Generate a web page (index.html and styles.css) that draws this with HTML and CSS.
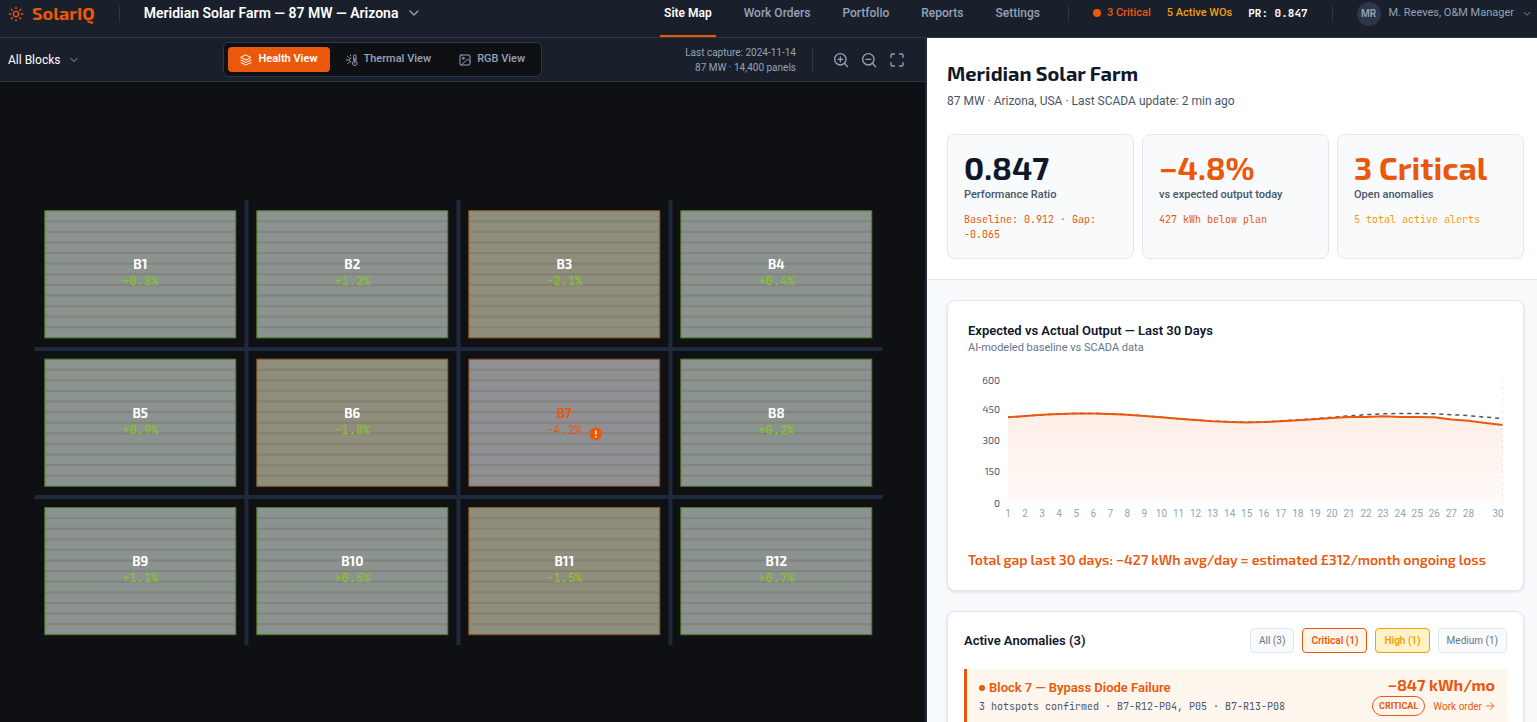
FILE: index.html
```
<!DOCTYPE html>
<html lang="en">
<head>
<meta charset="utf-8">
<title>SolarIQ — Site Map</title>
<link rel="stylesheet" href="styles.css">
</head>
<body>
<header class="topbar">
  <a class="brand" href="#">
    <svg class="icon" width="16" height="16" viewBox="0 0 24 24"><circle cx="12" cy="12" r="4"/><path d="M12 2v2M12 20v2M4.9 4.9l1.4 1.4M17.7 17.7l1.4 1.4M2 12h2M20 12h2M6.3 17.7l-1.4 1.4M19.1 4.9l-1.4 1.4"/></svg>
    <span class="brand-name">SolarIQ</span>
  </a>
  <span class="rule brand-rule"></span>
  <button class="site-picker" type="button">Meridian Solar Farm — 87 MW — Arizona
    <svg class="icon" width="16" height="16" viewBox="0 0 24 24"><path d="m6 9 6 6 6-6"/></svg>
  </button>
  <nav class="nav">
    <a class="nav-link active" href="#">Site Map</a>
    <a class="nav-link" href="#">Work Orders</a>
    <a class="nav-link" href="#">Portfolio</a>
    <a class="nav-link" href="#">Reports</a>
    <a class="nav-link" href="#">Settings</a>
  </nav>
  <span class="rule"></span>
  <div class="status">
    <span class="critical"><i class="dot"></i>3 Critical</span>
    <span class="orders">5 Active WOs</span>
    <span class="ratio">PR: 0.847</span>
  </div>
  <span class="rule"></span>
  <button class="user" type="button">
    <span class="avatar">MR</span>
    <span class="user-name">M. Reeves, O&amp;M Manager</span>
    <svg class="icon" width="10" height="10" viewBox="0 0 24 24"><path d="m5 8 7 7 7-7"/></svg>
  </button>
</header>
<div class="workspace">
  <section class="map-pane">
    <div class="toolbar">
      <button class="block-filter" type="button">All Blocks
        <svg class="icon" width="12" height="12" viewBox="0 0 24 24"><path d="m6 9 6 6 6-6"/></svg>
      </button>
      <div class="views">
        <button class="view selected" type="button"><svg class="icon" width="12" height="12" viewBox="0 0 24 24"><path d="m12 2 10 5-10 5L2 7zM2 12l10 5 10-5M2 17l10 5 10-5"/></svg><span>Health View</span></button>
        <button class="view" type="button"><svg class="icon" width="12" height="12" viewBox="0 0 24 24"><path d="M15 4a2.500 2.500 0 0 1 5 0v11a4.500 4.500 0 1 1-5 0zM17.500 9v9M1 12h3M9 2v2M3 5l2 2M10 8a4 4 0 0 0 0 8M3 20l3-3"/></svg><span>Thermal View</span></button>
        <button class="view" type="button"><svg class="icon" width="12" height="12" viewBox="0 0 24 24"><rect x="2" y="2" width="20" height="20" rx="2"/><circle cx="8.500" cy="8.500" r="2"/><path d="m22 15-5-5L5 22"/></svg><span>RGB View</span></button>
      </div>
      <div class="tools">
        <p class="capture">Last capture: 2024-11-14<br>87 MW · 14,400 panels</p>
        <span class="rule"></span>
        <button class="tool" type="button" aria-label="Zoom in"><svg class="icon" width="16" height="16" viewBox="0 0 24 24"><circle cx="11" cy="11" r="8.500"/><path d="m17 17 5 5M11 7.500v7M7.500 11h7"/></svg></button>
        <button class="tool" type="button" aria-label="Zoom out"><svg class="icon" width="16" height="16" viewBox="0 0 24 24"><circle cx="11" cy="11" r="8.500"/><path d="m17 17 5 5M7.500 11h7"/></svg></button>
        <button class="tool" type="button" aria-label="Full screen"><svg class="icon" width="16" height="16" viewBox="0 0 24 24"><path d="M8 3H5a2 2 0 0 0-2 2v3M16 3h3a2 2 0 0 1 2 2v3M8 21H5a2 2 0 0 1-2-2v-3M16 21h3a2 2 0 0 0 2-2v-3"/></svg></button>
      </div>
    </div>
    <svg class="map" id="map" viewBox="0 0 925 640" role="img" aria-label="Panel blocks"></svg>
  </section>
  <main class="detail">
    <section class="summary">
      <h1>Meridian Solar Farm</h1>
      <p class="meta">87 MW · Arizona, USA · Last SCADA update: 2 min ago</p>
      <div class="stats">
        <article class="stat">
          <strong>0.847</strong><span class="stat-label">Performance Ratio</span>
          <p class="stat-note">Baseline: 0.912 · Gap: -0.065</p>
        </article>
        <article class="stat">
          <strong class="hot">−4.8%</strong><span class="stat-label">vs expected output today</span>
          <p class="stat-note">427 kWh below plan</p>
        </article>
        <article class="stat">
          <strong class="hot">3 Critical</strong><span class="stat-label">Open anomalies</span>
          <p class="stat-note amber">5 total active alerts</p>
        </article>
      </div>
    </section>
    <div class="cards">
      <section class="card chart-card">
        <h2>Expected vs Actual Output — Last 30 Days</h2>
        <p class="chart-sub">AI-modeled baseline vs SCADA data</p>
        <svg class="chart" id="chart" viewBox="0 0 535 150" role="img" aria-label="Expected and actual output"></svg>
        <p class="gap-note">Total gap last 30 days: −427 kWh avg/day = estimated £312/month ongoing loss</p>
      </section>
      <section class="card anomalies">
        <div class="anomaly-head">
          <h2>Active Anomalies (3)</h2>
          <div class="filters">
            <button class="chip" type="button">All (3)</button>
            <button class="chip chip-critical" type="button">Critical (1)</button>
            <button class="chip chip-high" type="button">High (1)</button>
            <button class="chip" type="button">Medium (1)</button>
          </div>
        </div>
        <article class="anomaly">
          <div>
            <h3><i class="bullet"></i>Block 7 — Bypass Diode Failure</h3>
            <p class="spots">3 hotspots confirmed · B7-R12-P04, P05 · B7-R13-P08</p>
          </div>
          <div class="impact">
            <strong>−847 kWh/mo</strong>
            <div class="impact-row">
              <span class="badge">CRITICAL</span>
              <a class="order-link" href="#">Work order <svg class="icon" width="10" height="10" viewBox="0 0 24 24"><path d="M3 12h18M13 4l8 8-8 8"/></svg></a>
            </div>
          </div>
        </article>
      </section>
    </div>
  </main>
</div>
<script src="app.js"></script>
</body>
</html>
```
FILE: styles.css
```
* { box-sizing: border-box; }
body { margin: 0; height: 100vh; overflow: hidden; display: flex; flex-direction: column; font-family: Roboto, sans-serif; background: #0f1014; color: #0f172a; }
h1, h2, h3, p { margin: 0; }
button { font: inherit; color: inherit; background: none; border: 0; padding: 0; cursor: pointer; }
a { color: inherit; text-decoration: none; }
.icon { fill: none; stroke: currentColor; stroke-width: 2; stroke-linecap: round; stroke-linejoin: round; flex: none; }
.rule { width: 1px; height: 16px; background: #2d3748; flex: none; }

.topbar { display: flex; align-items: center; height: 38px; flex: none; padding: 0 5px 10px 8px; background: #1a1f2c; border-bottom: 1px solid #2d3748; white-space: nowrap; }
.brand { display: flex; align-items: center; gap: 8px; color: #ea580c; }
.brand-name { font: 700 18px/20px "Exo 2", "Noto Sans", sans-serif; padding-bottom: 2px; }
.brand-rule { margin: 0 24px; }
.site-picker { display: flex; align-items: center; gap: 8px; color: #fff; font-size: 14px; line-height: 16px; font-weight: 600; padding-bottom: 1px; }
.site-picker .icon { color: #94a3b8; }
.nav { display: flex; align-self: stretch; gap: 24px; margin-left: auto; margin-bottom: -10px; }
.nav-link { padding: 5px 4px 0; font-size: 12px; line-height: 16px; font-weight: 500; color: #94a3b8; border-bottom: 2px solid transparent; }
.nav-link.active { color: #fff; font-weight: 600; border-color: #ea580c; }
.nav + .rule { margin: 0 24px; }
.status { display: flex; gap: 16px; font-size: 11px; line-height: 16px; font-weight: 500; align-items: center; margin-right: 24px; padding-bottom: 2px; }
.critical { color: #ea580c; display: flex; align-items: center; gap: 6px; }
.dot { width: 8px; height: 8px; border-radius: 50%; background: #ea580c; }
.orders { color: #f59e0b; }
.ratio { color: #fff; font: 700 11px "JetBrains Mono", "Liberation Mono", monospace; }
.user { display: flex; align-items: center; gap: 8px; margin-left: 24px; color: #94a3b8; font-size: 11px; line-height: 16px; }
.user-name { padding-bottom: 2px; }
.avatar { width: 24px; height: 24px; border-radius: 50%; background: #2d3748; font-size: 10px; line-height: 24px; font-weight: 600; }

.workspace { flex: 1; min-height: 0; display: grid; grid-template-columns: minmax(0, 927fr) minmax(0, 610fr); }
.map-pane { display: flex; flex-direction: column; min-height: 0; border-right: 2px solid #1e293b; }
.toolbar { display: flex; justify-content: space-between; align-items: center; height: 44px; flex: none; padding: 0 20px 0 8px; background: #1a1f2c; border-bottom: 1px solid #2d3748; white-space: nowrap; }
.block-filter { display: flex; align-items: center; gap: 8px; color: #fff; font-size: 12px; }
.block-filter .icon { color: #94a3b8; }
.views { display: flex; gap: 4px; padding: 4px; background: #0f1014; border: 1px solid #2d3748; border-radius: 6px; }
.view { display: flex; align-items: center; gap: 6px; height: 25px; padding: 0 12px; border-radius: 4px; color: #94a3b8; font-size: 11px; line-height: 16px; font-weight: 500; }
.view span { padding-bottom: 2px; }
.view.selected { background: #ea580c; color: #fff; font-weight: 600; }
.tools { display: flex; align-items: center; gap: 12px; color: #94a3b8; }
.tools .rule { height: 24px; margin: 0 8px 0 4px; }
.capture { font-size: 10px; line-height: 15px; text-align: right; }
.tool { display: flex; }
.map { flex: 1; min-height: 0; width: 100%; }
.road { stroke: #1e293b; stroke-width: 4; }
.block-name { font: 700 13px "Exo 2", "Noto Sans", sans-serif; fill: #fff; text-anchor: middle; }
.block-name.alert { fill: #ea580c; }
.block-delta { font: 400 12px "JetBrains Mono", "Liberation Mono", monospace; fill: #84cc16; text-anchor: middle; }
.block-delta.alert { fill: #ea580c; }

.detail { display: flex; flex-direction: column; overflow: hidden; background: #f8fafc; }
.summary { flex: none; background: #fff; padding: 23px 13px 20px 20px; border-bottom: 1px solid #e2e8f0; }
h1 { font: 700 20px/24px "Exo 2", "Noto Sans", sans-serif; }
.meta { margin-top: 8px; font-size: 12px; line-height: 16px; color: #475569; }
.stats { display: grid; grid-template-columns: repeat(3, minmax(0, 1fr)); gap: 8px; margin-top: 25px; }
.stat { min-height: 125px; padding: 17px 16px 16px; border: 1px solid #e2e8f0; border-radius: 8px; background: #f8fafc; }
.stat strong { display: block; margin-bottom: 4px; font: 700 32px/31px "Exo 2", "Noto Sans", sans-serif; white-space: nowrap; }
.stat .hot { color: #ea580c; }
.stat-label { display: block; font-size: 11px; line-height: 16px; font-weight: 500; color: #475569; }
.stat-note { margin-top: 9px; font: 10px/15px "JetBrains Mono", "Liberation Mono", monospace; color: #ea580c; }
.stat-note.amber { color: #f59e0b; }
.cards { display: flex; flex-direction: column; gap: 20px; padding: 20px 13px 0 20px; }
.card { flex: none; background: #fff; border: 1px solid #e2e8f0; border-radius: 8px; box-shadow: 0 1px 3px rgba(15, 23, 42, .12); }
.card h2 { font-size: 13px; line-height: 18px; font-weight: 600; }
.chart-card { padding: 21px 20px 19px; }
.chart-sub { font-size: 11px; line-height: 16px; color: #64748b; }
.chart { display: block; width: 100%; margin: 17px 0 26px; overflow: visible; }
.axis-y { font: 10px "Exo 2", "Noto Sans", sans-serif; fill: #475569; text-anchor: end; }
.axis-x { font: 10px Roboto, sans-serif; fill: #94a3b8; text-anchor: middle; }
.gap-note { font: 600 14px/22px "Exo 2", "Noto Sans", sans-serif; color: #ea580c; white-space: nowrap; }
.anomalies { padding: 16px; }
.anomaly-head { display: flex; align-items: center; justify-content: space-between; margin-bottom: 16px; }
.filters { display: flex; gap: 8px; }
.chip { height: 25px; padding: 0 8px; border: 1px solid #e2e8f0; border-radius: 4px; background: #f8fafc; color: #64748b; font-size: 10px; }
.chip-critical { border-color: #ea580c; background: #fff7ed; color: #ea580c; font-weight: 600; }
.chip-high { border-color: #f59e0b; background: #fef3c7; color: #f59e0b; font-weight: 600; }
.anomaly { display: flex; justify-content: space-between; padding: 6px 12px 8px; border-left: 3px solid #ea580c; background: #fff7ed; white-space: nowrap; }
.anomaly h3 { display: flex; align-items: center; gap: 4px; margin-top: 4px; font-size: 13px; line-height: 18px; font-weight: 600; color: #ea580c; }
.bullet { width: 6px; height: 6px; border-radius: 50%; background: #ea580c; }
.spots { margin-top: 2px; font: 10px/16px "JetBrains Mono", "Liberation Mono", monospace; color: #475569; }
.impact { text-align: right; color: #ea580c; }
.impact strong { display: block; font: 700 16px/20px "Exo 2", "Noto Sans", sans-serif; }
.impact-row { display: flex; align-items: center; justify-content: flex-end; gap: 8px; margin-top: 1px; font-size: 10px; }
.order-link { display: flex; align-items: center; gap: 3px; }
.badge { height: 20px; padding: 0 6px; border: 1px solid #ea580c; border-radius: 10px; font-size: 9px; line-height: 18px; font-weight: 700; }
```
FILE: app.js
```
const NS = 'http://www.w3.org/2000/svg';
function add(parent, tag, attrs, text) {
  const el = document.createElementNS(NS, tag);
  for (const k in attrs) el.setAttribute(k, attrs[k]);
  if (text !== undefined) el.textContent = text;
  parent.appendChild(el);
  return el;
}

const map = document.getElementById('map');
const tones = {
  good: ['#8a938f', '#4d7c1f'],
  warn: ['#8f8d7c', '#8a5a1c'],
  bad: ['#8e9094', '#8f3f20']
};
const blocks = [
  ['+0.8%', 'good'], ['+1.2%', 'good'], ['-2.1%', 'warn'], ['+0.4%', 'good'],
  ['+0.9%', 'good'], ['-1.8%', 'warn'], ['-4.2%', 'bad'], ['+0.2%', 'good'],
  ['+1.1%', 'good'], ['+0.5%', 'good'], ['-1.5%', 'warn'], ['+0.7%', 'good']
];
blocks.forEach(([delta, tone], i) => {
  const x = 44.8 + (i % 4) * 212;
  const y = 128.7 + Math.floor(i / 4) * 148.4;
  add(map, 'rect', { x, y, width: 191, height: 127.2, fill: tones[tone][0] });
  for (let n = 1; n < 12; n++) {
    add(map, 'rect', { x, y: y + n * 10.6 - 1, width: 191, height: 2, fill: '#7d776c', 'fill-opacity': 0.55 });
  }
  add(map, 'rect', { x, y, width: 191, height: 127.2, fill: 'none', stroke: tones[tone][1] });
  const alert = tone === 'bad' ? ' alert' : '';
  add(map, 'text', { x: x + 95.5, y: y + 58.5, class: 'block-name' + alert }, 'B' + (i + 1));
  add(map, 'text', { x: x + 95.5, y: y + 74.5, class: 'block-delta' + alert }, delta);
  if (alert) {
    add(map, 'circle', { cx: x + 127, cy: y + 74.7, r: 6.4, fill: '#ea580c' });
    add(map, 'path', { d: `M${x + 127} ${y + 71.5}v4M${x + 127} ${y + 77}v1.5`, stroke: '#fff', 'stroke-width': 1.5 });
  }
});
[246.5, 458.5, 670.5].forEach(x => add(map, 'path', { d: `M${x} 118v445`, class: 'road' }));
[267, 415].forEach(y => add(map, 'path', { d: `M34.500 ${y}h848`, class: 'road' }));

const chart = document.getElementById('chart');
const left = 40, right = 534.5, base = 130, scale = 123 / 600;
const step = (right - left) / 29;
const expected = [418, 424, 430, 435, 437, 437, 435, 431, 425, 418, 411, 405, 400, 396, 394, 396, 400, 405, 411, 418, 425, 431, 435, 437, 437, 435, 431, 426, 419, 412];
const actual = [418, 424, 430, 434, 436, 436, 434, 430, 424, 418, 411, 405, 399, 395, 393, 395, 399, 404, 409, 415, 419, 420, 423, 420, 419, 418, 407, 401, 390, 380];
const line = data => data.map((v, i) => `${i ? 'L' : 'M'}${left + i * step} ${base - v * scale}`).join('');
const defs = add(chart, 'defs', {});
const grad = add(defs, 'linearGradient', { id: 'output-fill', x1: 0, y1: 0, x2: 0, y2: 1 });
add(grad, 'stop', { offset: 0, 'stop-color': '#ea580c', 'stop-opacity': 0.1 });
add(grad, 'stop', { offset: 1, 'stop-color': '#ea580c', 'stop-opacity': 0.03 });
add(chart, 'path', { d: `M${right} 7V${base}`, stroke: '#e8edf3', 'stroke-dasharray': '3 3' });
add(chart, 'path', { d: `${line(actual)}L${right} ${base}L${left} ${base}Z`, fill: 'url(#output-fill)' });
add(chart, 'path', { d: line(expected), fill: 'none', stroke: '#475569', 'stroke-width': 1.5, 'stroke-dasharray': '4 4' });
add(chart, 'path', { d: line(actual), fill: 'none', stroke: '#ea580c', 'stroke-width': 2 });
[[600, 11], [450, 40], [300, 71], [150, 102], [0, 134]].forEach(([v, y]) => add(chart, 'text', { x: 32, y, class: 'axis-y' }, v));
for (let d = 1; d <= 30; d++) {
  if (d !== 29) add(chart, 'text', { x: d === 30 ? 530 : left + (d - 1) * step, y: 144, class: 'axis-x' }, d);
}
```
